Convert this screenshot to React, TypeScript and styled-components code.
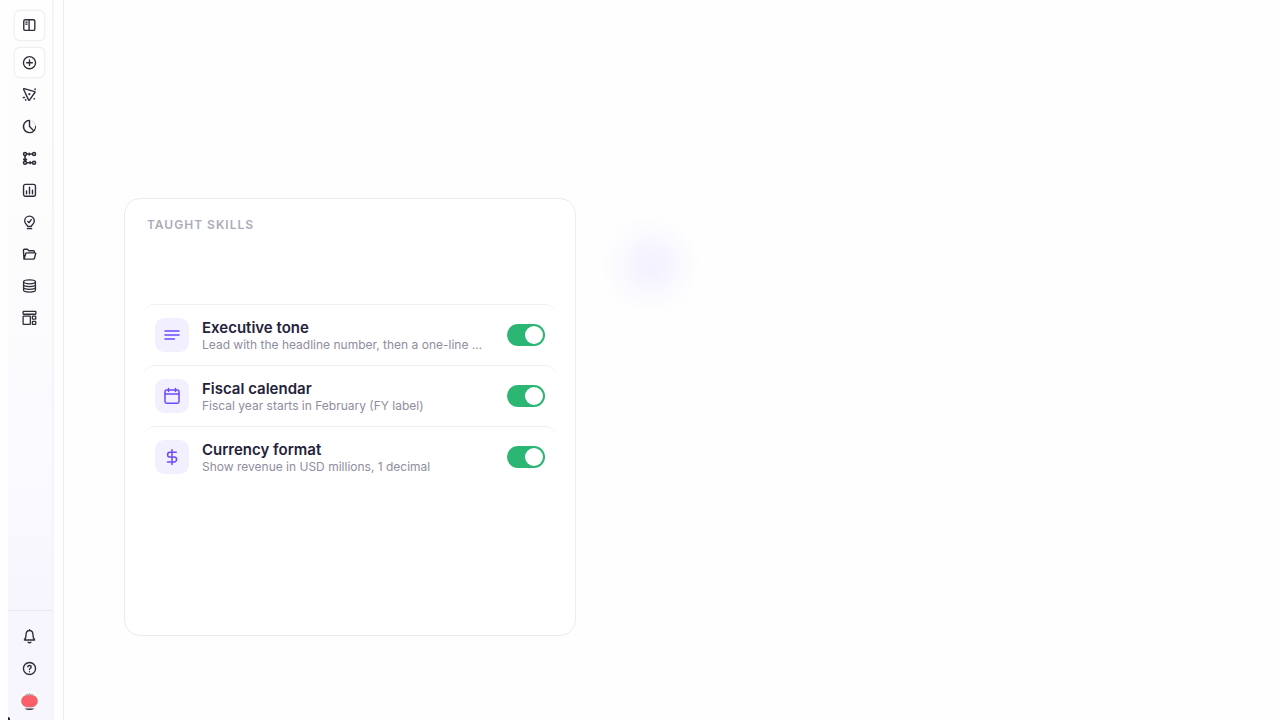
import React from "react";
import styled, { createGlobalStyle } from "styled-components";

const GlobalStyle = createGlobalStyle`
  * { box-sizing: border-box; }
  body { margin: 0; background: #fefefe; font-family: Inter, "Liberation Sans", sans-serif; }
  button, input { font: inherit; margin: 0; }
`;

const Page = styled.div`
  display: flex;
  min-height: 100vh;
  padding-left: 8px;
`;

const Sidebar = styled.aside`
  position: relative;
  display: flex;
  flex-direction: column;
  flex: none;
  width: 46px;
  border-right: 2px solid #f5f4f9;
  background: linear-gradient(180deg, #fefefe 0%, #fcfcfd 35%, #fafaff 62%, #f7f6fe 85%, #f7f6fe 100%);
`;

const CornerMark = styled.span`
  position: absolute;
  left: 0;
  bottom: 0;
  width: 2px;
  height: 3px;
  border-top-right-radius: 2px;
  background: #22222a;
`;

const NavList = styled.nav`
  display: flex;
  flex-direction: column;
  align-items: center;
  gap: 1px;
  padding: 10px 1px 0 0;
`;

const FooterList = styled(NavList)`
  margin-top: auto;
  padding: 10px 1px 4px 0;
  border-top: 1px solid #e9e8f0;
`;

const NavButton = styled.button<{ $raised?: boolean; $spaced?: boolean }>`
  display: grid;
  place-items: center;
  width: 31px;
  height: 31px;
  padding: 0;
  margin-bottom: ${(p) => (p.$spaced ? "5px" : "0")};
  border: 1px solid ${(p) => (p.$raised ? "#f0f0f2" : "transparent")};
  border-radius: 6px;
  background: ${(p) => (p.$raised ? "#ffffff" : "transparent")};
  box-shadow: ${(p) => (p.$raised ? "0 0 2px rgba(30, 30, 60, 0.08)" : "none")};
  color: #2e2e38;
  cursor: pointer;
`;

const Main = styled.main`
  display: flex;
  align-items: flex-start;
  flex: 1;
  gap: 24px;
  min-width: 0;
  margin-left: 9px;
  padding: 198px 24px 24px 60px;
  border-left: 1px solid #eeeef2;
`;

const Card = styled.section`
  flex: 0 1 452px;
  min-width: 0;
  min-height: 438px;
  padding: 18px 18px 24px;
  border: 1px solid #ececf0;
  border-radius: 16px;
  background: #ffffff;
`;

const CardTitle = styled.h2`
  margin: 0 0 71px;
  padding-left: 4px;
  color: #adabb9;
  font-size: 12px;
  font-weight: 600;
  line-height: 16px;
  letter-spacing: 1px;
`;

const SkillList = styled.ul`
  margin: 0;
  padding: 0;
  list-style: none;
`;

const SkillRow = styled.li`
  display: flex;
  align-items: center;
  height: 61px;
  padding: 0 12px;
  border-top: 1px solid #f0f0f3;
  border-radius: 12px;
`;

const SkillIcon = styled.span`
  display: grid;
  place-items: center;
  flex: none;
  width: 34px;
  height: 34px;
  border-radius: 9px;
  background: #f2efff;
  color: #6d4aff;
`;

const SkillText = styled.label`
  flex: 1;
  min-width: 0;
  margin: 0 13px;
`;

const SkillName = styled.span`
  display: block;
  color: #24223a;
  font-size: 15px;
  font-weight: 600;
  line-height: 19px;
`;

const SkillDetail = styled.span`
  display: block;
  overflow: hidden;
  color: #8f8da0;
  font-size: 12px;
  line-height: 15px;
  text-overflow: ellipsis;
  white-space: nowrap;
`;

const Switch = styled.input`
  appearance: none;
  display: flex;
  flex: none;
  width: 38px;
  height: 22px;
  padding: 2px;
  border-radius: 11px;
  background: #c9c8d3;
  cursor: pointer;

  &::before {
    content: "";
    width: 18px;
    height: 18px;
    border-radius: 50%;
    background: #ffffff;
  }
  &:checked {
    justify-content: flex-end;
    background: #2bb673;
  }
`;

const Glow = styled.div`
  flex: none;
  width: 102px;
  height: 102px;
  margin-top: 16px;
  border-radius: 50%;
  background: radial-gradient(circle closest-side, #f4f2ff 0%, #f5f3ff 22%, #f8f7ff 46%, #fafaff 62%, #fcfcfe 80%, #fefefe 100%);
`;

type IconProps = { box?: number; size?: number; width?: number; children: React.ReactNode };

const Icon = ({ box = 16, size = 17, width = 1.3, children }: IconProps) => (
  <svg
    width={size}
    height={size}
    viewBox={`0 0 ${box} ${box}`}
    fill="none"
    stroke="currentColor"
    strokeWidth={width}
    strokeLinecap="round"
    strokeLinejoin="round"
    aria-hidden="true"
  >
    {children}
  </svg>
);

const navItems = [
  {
    label: "Toggle sidebar",
    raised: true,
    spaced: true,
    icon: <Icon><rect x="2.6" y="2.6" width="10.4" height="10" rx="1.4" /><path d="M7.6 2.6v10" /><path d="M4.4 4.8h1.5M4.4 6.7h1.5" strokeWidth="1" /></Icon>,
  },
  {
    label: "New",
    raised: true,
    icon: <Icon><circle cx="8" cy="8.2" r="5.7" /><path d="M8 5.5v5.4M5.3 8.2h5.4" /></Icon>,
  },
  {
    label: "Agents",
    icon: <Icon width={1.3}><path d="M2.4 3.1Q2.2 2.4 3 2.5L12.9 5.3Q13.7 5.6 13 6.1L8 13.2Q7.5 13.8 7.1 13.1Z" /><circle cx="7.9" cy="7.7" r="1" fill="currentColor" stroke="none" /><path d="M13.3 3v.1M2.3 10.8h.8M4.4 13v.1M12.4 12h.1" strokeWidth="1.6" /></Icon>,
  },
  {
    label: "History",
    icon: <Icon><path d="M8 2.2a5.8 5.8 0 1 0 4.8 9.2M8 2.2V8l4 4" /><path d="M13.7 7.9c0 1.3-.4 2.4-1 3.4" strokeWidth="1" /><path d="M10.3 2.7a5.8 5.8 0 0 1 3.3 4" strokeWidth=".5" opacity=".35" /></Icon>,
  },
  {
    label: "Workflows",
    icon: <Icon width={1.5}><circle cx="3.8" cy="3.8" r="1.4" /><circle cx="12.3" cy="3.8" r="1.4" /><circle cx="3.8" cy="12" r="1.4" /><circle cx="12.3" cy="12" r="1.4" /><path d="M5.5 3.8h5M5.5 12h5M3.8 5.5v5M2.6 8.7 3.8 10.2l1.3-1.4M7.8 3v1.6M8.6 11.2v1.6" /></Icon>,
  },
  {
    label: "Reports",
    icon: <Icon><rect x="2.4" y="2.2" width="11.2" height="11.2" rx="1.8" /><path d="M5.2 8.4v2.6M8 4.8V11M10.8 7.8V11" /></Icon>,
  },
  {
    label: "Insights",
    icon: <Icon width={1.3}><path d="M6.3 11.8c0-1.5-2.8-2.2-2.8-5.3a4.5 4.5 0 0 1 9 0c0 3.1-2.8 3.8-2.8 5.3ZM6 13.8h4M6.4 7.1l1.2 1L9.6 5.2" /></Icon>,
  },
  {
    label: "Files",
    icon: <Icon><path d="M2.8 12.4 2.3 4.1c0-.6.4-1 1-1H6l1.4 1.4h4.2c.6 0 1 .4 1 1v.9M2.8 12.4l1.7-5.3c.1-.4.4-.6.8-.6h7.9c.5 0 .7.4.6.8l-1.2 4.5c-.1.4-.4.6-.9.6Z" /></Icon>,
  },
  {
    label: "Data sources",
    icon: <Icon width={1.2}><ellipse cx="8" cy="3.6" rx="5.6" ry="1.9" /><path d="M2.4 3.6v7.8c0 2.6 11.2 2.6 11.2 0V3.6M2.4 6.2c0 2.5 11.2 2.5 11.2 0M2.4 8.8c0 2.5 11.2 2.5 11.2 0" /></Icon>,
  },
  {
    label: "Layouts",
    icon: <Icon width={1.2}><rect x="2" y="1.2" width="12" height="2.8" rx=".4" /><rect x="2" y="5.8" width="6.8" height="7.8" rx=".4" /><rect x="10.7" y="5.8" width="3.2" height="2.8" rx=".4" /><rect x="10.7" y="10.8" width="3.2" height="2.8" rx=".4" /></Icon>,
  },
];

const footerItems = [
  {
    label: "Notifications",
    icon: <Icon width={1.3}><path d="M8 2.3c-2.1 0-3.2 1.5-3.2 3.5 0 3-.6 4.3-1.6 5.5h9.6c-1-1.2-1.6-2.5-1.6-5.5 0-2-1.1-3.5-3.2-3.5ZM6.7 13.3c.5.7 2.1.7 2.6 0M8 1.7v.5" /></Icon>,
  },
  {
    label: "Help",
    icon: <Icon><circle cx="8" cy="8" r="5.7" /><path d="M6.4 6.5c.2-1.9 3.2-1.7 3.2.1C9.6 7.8 8 7.8 8 9M8 10.9v.1" /></Icon>,
  },
  {
    label: "Account",
    icon: (
      <svg width="21" height="21" viewBox="0 0 21 21" aria-hidden="true">
        <circle cx="10.5" cy="10.5" r="9.5" fill="#ffffff" />
        <path d="M5.5 18.4h10q-2 1.6-5 1.6t-5-1.6Z" fill="#32323d" />
        <rect x="2.2" y="5" width="16.6" height="12.2" rx="6.2" fill="#f95f68" stroke="#c4a3a8" strokeWidth=".5" />
        <path d="M6.5 4.4 8.5 4l2 1.2 2-1.2 2 .4M10.5 5V3" fill="none" stroke="#aaa5a8" strokeWidth=".9" />
      </svg>
    ),
  },
];

const skills = [
  {
    id: "tone",
    name: "Executive tone",
    detail: "Lead with the headline number, then a one-line …",
    icon: <Icon box={18} size={18} width={1.5}><path d="M2 5h14M2 9h14M2 13h9.5" /></Icon>,
  },
  {
    id: "calendar",
    name: "Fiscal calendar",
    detail: "Fiscal year starts in February (FY label)",
    icon: <Icon box={18} size={18} width={1.5}><rect x="2" y="3" width="14" height="13.2" rx="1.6" /><path d="M2 7h14M5.5 1.5v3M12.5 1.5v3" /></Icon>,
  },
  {
    id: "currency",
    name: "Currency format",
    detail: "Show revenue in USD millions, 1 decimal",
    icon: <Icon box={18} size={18} width={1.5}><path d="M9 1.7v14.8M13.3 4.3H7a2.4 2.4 0 0 0 0 4.8h4.2a2.4 2.4 0 0 1 0 4.8H4.5" /></Icon>,
  },
];

export default function App() {
  return (
    <>
      <GlobalStyle />
      <Page>
        <Sidebar>
          <NavList aria-label="Main">
            {navItems.map((item) => (
              <NavButton key={item.label} type="button" aria-label={item.label} $raised={item.raised} $spaced={item.spaced}>
                {item.icon}
              </NavButton>
            ))}
          </NavList>
          <FooterList aria-label="Account">
            {footerItems.map((item) => (
              <NavButton key={item.label} type="button" aria-label={item.label}>
                {item.icon}
              </NavButton>
            ))}
          </FooterList>
          <CornerMark />
        </Sidebar>
        <Main>
          <Card>
            <CardTitle>TAUGHT SKILLS</CardTitle>
            <SkillList>
              {skills.map((skill) => (
                <SkillRow key={skill.id}>
                  <SkillIcon>{skill.icon}</SkillIcon>
                  <SkillText htmlFor={skill.id}>
                    <SkillName>{skill.name}</SkillName>
                    <SkillDetail>{skill.detail}</SkillDetail>
                  </SkillText>
                  <Switch id={skill.id} type="checkbox" role="switch" defaultChecked />
                </SkillRow>
              ))}
            </SkillList>
          </Card>
          <Glow />
        </Main>
      </Page>
    </>
  );
}
